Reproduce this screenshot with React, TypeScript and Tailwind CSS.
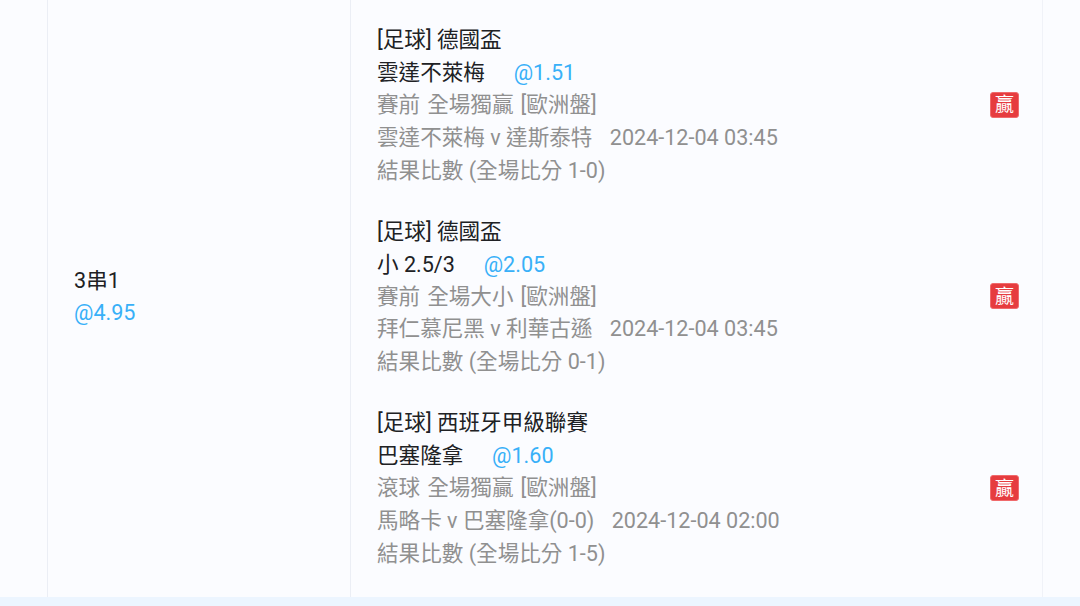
import React from 'react';

interface Leg {
  league: string;
  pick: string;
  odds: string;
  market: string;
  match: string;
  time: string;
  score: string;
}

const legs: Leg[] = [
  {
    league: '[足球] 德國盃',
    pick: '雲達不萊梅',
    odds: '@1.51',
    market: '賽前 全場獨贏 [歐洲盤]',
    match: '雲達不萊梅 v 達斯泰特',
    time: '2024-12-04 03:45',
    score: '結果比數 (全場比分 1-0)',
  },
  {
    league: '[足球] 德國盃',
    pick: '小 2.5/3',
    odds: '@2.05',
    market: '賽前 全場大小 [歐洲盤]',
    match: '拜仁慕尼黑 v 利華古遜',
    time: '2024-12-04 03:45',
    score: '結果比數 (全場比分 0-1)',
  },
  {
    league: '[足球] 西班牙甲級聯賽',
    pick: '巴塞隆拿',
    odds: '@1.60',
    market: '滾球 全場獨贏 [歐洲盤]',
    match: '馬略卡 v 巴塞隆拿(0-0)',
    time: '2024-12-04 02:00',
    score: '結果比數 (全場比分 1-5)',
  },
];

const LegRow: React.FC<{ leg: Leg }> = ({ leg }) => {
  return (
    <div className="flex items-center justify-between pr-[23px]">
      <div className="whitespace-nowrap text-[#909090]">
        <p className="text-[#202124]">{leg.league}</p>
        <p className="text-[#202124]">
          {leg.pick}
          <span className="ml-[28.8px] text-[#38b0f8]">{leg.odds}</span>
        </p>
        <p className="leading-[31.8px] [word-spacing:1.7px]">{leg.market}</p>
        <p>
          {leg.match}
          <span className="ml-[17.4px]">{leg.time}</span>
        </p>
        <p>{leg.score}</p>
      </div>
      <span className="flex h-[26px] w-[29px] items-center justify-center rounded-[3px] border border-[#f06a6c] bg-[#e63c3f] text-[19px] text-white">
        贏
      </span>
    </div>
  );
};

export default function App() {
  return (
    <div className="h-[606px] w-[1080px] overflow-hidden bg-[#fbfcff] font-[Roboto,'Noto_Sans_CJK_TC',sans-serif] text-[21.58px] leading-[33px]">
      <div className="flex h-[597px]">
        <div className="w-12 border-r border-[#ebeef5]" />
        <div className="flex w-[303px] flex-col justify-center border-r border-[#ebeef5] pb-[3px] pl-[26px] leading-8">
          <p className="text-[#202124]">3串1</p>
          <p className="text-[#38b0f8]">@4.95</p>
        </div>
        <div className="flex w-[692px] flex-col gap-[27.8px] border-r border-[#f0f2f8] pl-[26px] pt-[23px]">
          {legs.map((leg, i) => (
            <LegRow key={i} leg={leg} />
          ))}
        </div>
      </div>
      <div className="h-[9px] bg-[#ecf5ff]" />
    </div>
  );
}
